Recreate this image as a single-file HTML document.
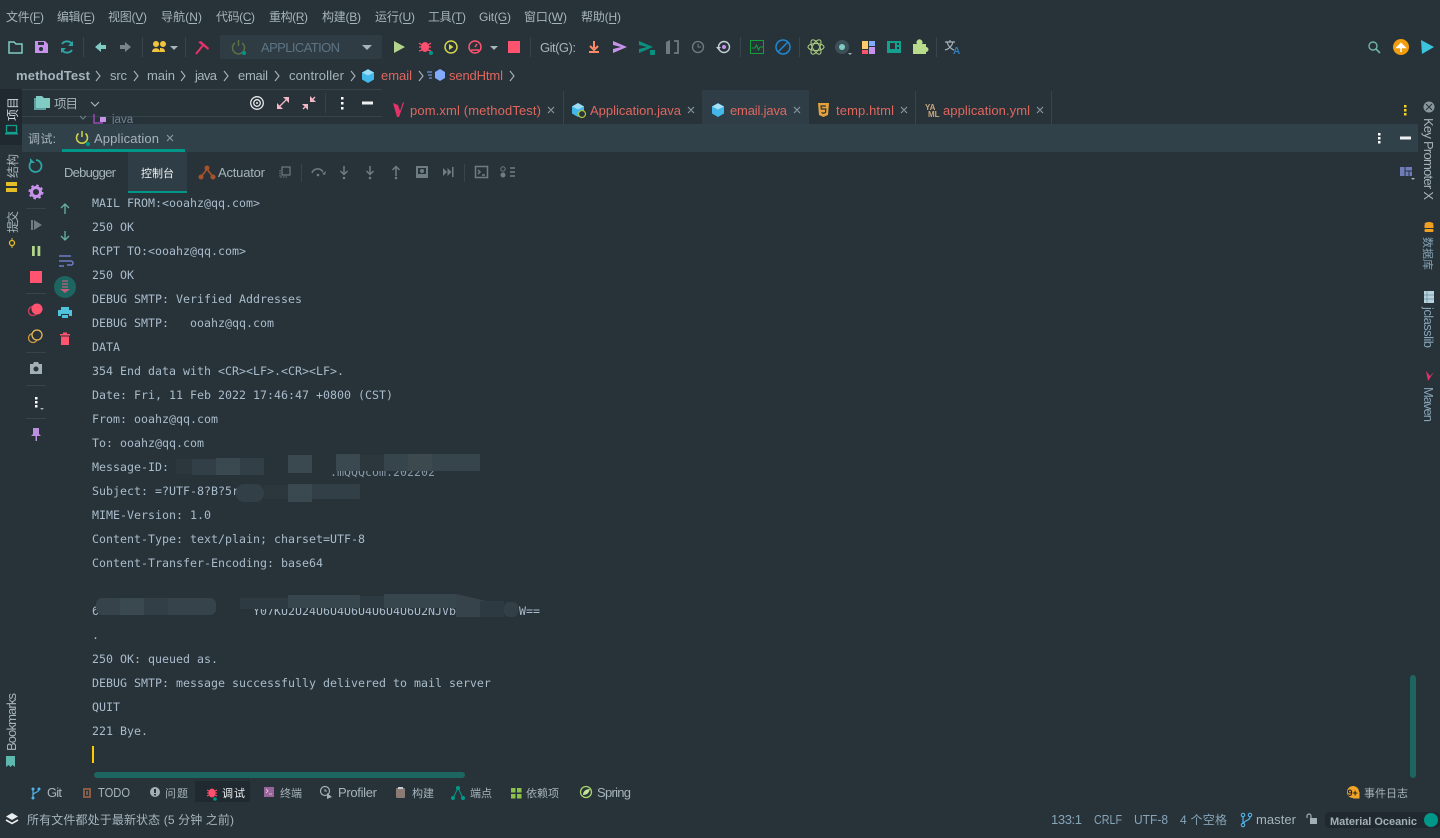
<!DOCTYPE html>
<html><head><meta charset="utf-8"><title>methodTest</title>
<style>
html,body{margin:0;padding:0;background:#283239;width:1440px;height:838px;overflow:hidden}
svg{display:block}
text{font-family:"Liberation Sans","Noto Sans CJK SC",sans-serif;font-size:12px;fill:#a6b4bc;white-space:pre}
.m text{font-family:"DejaVu Sans Mono","Liberation Mono",monospace;font-size:11.63px;fill:#a9bccb}
.r text,text.r{fill:#e0675e}
.b{fill:#86a5b8}
.l text,text.l{font-size:13px}
.c{font-size:11px}
</style></head><body>
<svg width="1440" height="838" viewBox="0 0 1440 838" xmlns="http://www.w3.org/2000/svg">
<rect width="1440" height="838" fill="#283239"/>

<!-- menu -->
<g>
<text x="6" y="21" textLength="38">文件(F)</text><rect x="34" y="23" width="6" height="1" fill="#a6b4bc"/>
<text x="57" y="21" textLength="38">编辑(E)</text><rect x="85" y="23" width="6" height="1" fill="#a6b4bc"/>
<text x="108" y="21" textLength="39">视图(V)</text><rect x="136" y="23" width="7" height="1" fill="#a6b4bc"/>
<text x="161" y="21" textLength="41">导航(N)</text><rect x="189" y="23" width="8" height="1" fill="#a6b4bc"/>
<text x="216" y="21" textLength="39">代码(C)</text><rect x="244" y="23" width="7" height="1" fill="#a6b4bc"/>
<text x="269" y="21" textLength="39">重构(R)</text><rect x="297" y="23" width="7" height="1" fill="#a6b4bc"/>
<text x="322" y="21" textLength="39">构建(B)</text><rect x="350" y="23" width="7" height="1" fill="#a6b4bc"/>
<text x="375" y="21" textLength="40">运行(U)</text><rect x="403" y="23" width="8" height="1" fill="#a6b4bc"/>
<text x="428" y="21" textLength="38">工具(T)</text><rect x="456" y="23" width="6" height="1" fill="#a6b4bc"/>
<text x="479" y="21" textLength="32">Git(G)</text><rect x="500" y="23" width="7" height="1" fill="#a6b4bc"/>
<text x="524" y="21" textLength="43">窗口(W)</text><rect x="552" y="23" width="10" height="1" fill="#a6b4bc"/>
<text x="581" y="21" textLength="40">帮助(H)</text><rect x="609" y="23" width="7" height="1" fill="#a6b4bc"/>
</g>

<!-- toolbar -->
<g>
<path d="M9 42h5l2 2h6v9H9z" fill="none" stroke="#80cbc4" stroke-width="1.500"/>
<path d="M35 41h10l3 3v9H35z" fill="#c792ea"/><rect x="38" y="42" width="6" height="3" fill="#283239"/><circle cx="41" cy="49" r="2" fill="#283239"/>
<path d="M62 44a6 6 0 0 1 10 0M72 50a6 6 0 0 1-10 0" fill="none" stroke="#2fa3a3" stroke-width="2"/><path d="M73 41v5h-5zM61 53v-5h5z" fill="#2fa3a3"/>
<rect x="83" y="37" width="1" height="20" fill="#36444c"/>
<path d="M95 47l6-5v3h5v4h-5v3z" fill="#80cbc4"/>
<path d="M131 47l-6-5v3h-5v4h5v3z" fill="#78848a"/>
<rect x="142" y="37" width="1" height="20" fill="#36444c"/>
<circle cx="156" cy="44" r="3" fill="#f2c43c"/><circle cx="163" cy="44" r="3" fill="#f2c43c"/><path d="M152 52c0-5 8-5 8 0zM160 52h5c0-4-3-4-5-4z" fill="#f2c43c"/>
<path d="M170 46h8l-4 4z" fill="#a6b4bc"/>
<rect x="185" y="37" width="1" height="20" fill="#36444c"/>
<path d="M196 54l8-10" fill="none" stroke="#e2336b" stroke-width="2"/><path d="M198 42l3-1 8 7-1 2z" fill="#e2336b"/>
<rect x="220" y="35" width="162" height="24" rx="2" fill="#303c44"/>
<path d="M235 43a6 6 0 1 0 7 0M238.500 40v6" fill="none" stroke="#5e6f45" stroke-width="1.500"/><circle cx="244" cy="53" r="2" fill="#009688"/>
<text x="261" y="52" textLength="79" style="font-size:13px;fill:#5c7484">APPLICATION</text>
<path d="M362 45h10l-5 5z" fill="#a6b4bc"/>
<path d="M394 41l11 6-11 6z" fill="#b2d58c"/>
<ellipse cx="425" cy="47" rx="4" ry="5" fill="#ff4f6f"/><path d="M419 43l3 2M431 43l-3 2M419 47h3M431 47h-3M419 51l3-1M431 51l-3-1" stroke="#ff4f6f" stroke-width="1.300"/><circle cx="431" cy="53" r="2" fill="#009688"/>
<circle cx="451" cy="47" r="6" fill="none" stroke="#d3d34a" stroke-width="1.500"/><path d="M449 44l4.500 3-4.500 3z" fill="#d3d34a"/>
<circle cx="475" cy="47" r="6" fill="none" stroke="#ff5370" stroke-width="1.500"/><path d="M475 47l2-3" stroke="#ff5370" stroke-width="1.500"/><path d="M471 50h8" stroke="#ff5370" stroke-width="1.500"/>
<path d="M490 46h8l-4 4z" fill="#a6b4bc"/>
<rect x="508" y="41" width="12" height="12" fill="#ff5370"/>
<rect x="530" y="37" width="1" height="20" fill="#36444c"/>
<text class="l" x="540" y="52" textLength="36">Git(G):</text>
<path d="M594 41v7M590 46l4 4 4-4" fill="none" stroke="#ff8a65" stroke-width="2"/><rect x="589" y="51" width="10" height="2" fill="#ff8a65"/>
<path d="M613 41l14 6-14 6v-4l8-2-8-2z" fill="#c792ea"/>
<path d="M639 41l14 6-14 6v-4l8-2-8-2z" fill="#0b8f7f"/><rect x="650" y="50" width="5" height="5" fill="#0b8f7f"/>
<path d="M674 41h4v12h-4" fill="none" stroke="#6d7a81" stroke-width="1.800"/><path d="M666 42l4-2v14h-4z" fill="#6d7a81"/>
<circle cx="698" cy="47" r="5.500" fill="none" stroke="#6f7c83" stroke-width="1.300"/><path d="M698 44v3h3" fill="none" stroke="#6f7c83"/>
<circle cx="724" cy="47" r="5.500" fill="none" stroke="#c5d0d6" stroke-width="1.400"/><circle cx="724" cy="47" r="2" fill="#c792ea"/><path d="M716 47h5l-2.500 3z" fill="#c5d0d6"/>
<rect x="740" y="37" width="1" height="20" fill="#36444c"/>
<rect x="750.500" y="40.500" width="13" height="13" fill="none" stroke="#11a03b"/><path d="M752 48h3l1.500-3 2 5 1.500-3h3" fill="none" stroke="#11a03b"/>
<circle cx="783" cy="47" r="7" fill="none" stroke="#1e88d2" stroke-width="1.500"/><path d="M778 52l10-10" stroke="#1e88d2" stroke-width="1.500"/>
<rect x="799" y="37" width="1" height="20" fill="#36444c"/>
<g fill="none" stroke="#a6c97d" stroke-width="1.100"><ellipse cx="816" cy="47" rx="8" ry="3.500"/><ellipse cx="816" cy="47" rx="8" ry="3.500" transform="rotate(60 816 47)"/><ellipse cx="816" cy="47" rx="8" ry="3.500" transform="rotate(120 816 47)"/></g>
<circle cx="842" cy="47" r="7" fill="#3d5058"/><circle cx="842" cy="47" r="3" fill="#80cbc4"/><path d="M848 53h4l-2 2z" fill="#a6b4bc"/>
<rect x="862" y="41" width="6" height="8" fill="#ffcb6b"/><rect x="869" y="41" width="6" height="5" fill="#82aaff"/><rect x="862" y="50" width="6" height="4" fill="#ff5370"/><rect x="869" y="47" width="6" height="7" fill="#c792ea"/>
<rect x="887" y="41" width="14" height="12" fill="#13a08f"/><rect x="890" y="43" width="5" height="6" fill="#283239"/><rect x="897" y="43" width="2" height="2" fill="#283239"/><rect x="897" y="47" width="2" height="2" fill="#283239"/>
<path d="M913 44h4a3 3 0 1 1 5 0h4v3a2.500 2.500 0 1 1 0 5v2h-13z" fill="#b8dc8c"/>
<rect x="936" y="37" width="1" height="20" fill="#36444c"/>
<path d="M945 42h10M950 40v2M947 42c1 4 4 7 7 8M953 42c-1 4-4 7-8 8" fill="none" stroke="#a6b4bc" stroke-width="1.200"/>
<text x="953" y="54" style="font-size:10px;font-weight:bold;fill:#2f7fbd">A</text>
<circle cx="1373" cy="46" r="4" fill="none" stroke="#6fb3ad" stroke-width="1.400"/><path d="M1376 49l4 4" stroke="#6fb3ad" stroke-width="1.600"/>
<circle cx="1401" cy="47" r="8" fill="#f29d0c"/><path d="M1401 52v-5M1397 47.500l4-4 4 4z" fill="#fff" stroke="#fff" stroke-width="1.500"/>
<path d="M1421 40l13 7-12 7z" fill="#3cc4dc"/>
</g>

<!-- breadcrumb -->
<g class="l">
<text x="16" y="80" textLength="74" style="font-weight:bold">methodTest</text>
<text x="110" y="80" textLength="17">src</text>
<text x="147" y="80" textLength="28">main</text>
<text x="195" y="80" textLength="22">java</text>
<text x="238" y="80" textLength="30">email</text>
<text x="289" y="80" textLength="55">controller</text>
<text class="r" x="381" y="80" textLength="31">email</text>
<text class="r" x="449" y="80" textLength="54">sendHtml</text>
<path d="M96 71l4 5-4 5M134 71l4 5-4 5M181 71l4 5-4 5M224 71l4 5-4 5M275 71l4 5-4 5M351 71l4 5-4 5M419 71l4 5-4 5M510 71l4 5-4 5" fill="none" stroke="#a6b4bc" stroke-width="1.100"/>
<path d="M368 69l6 3.500v7l-6 3.500-6-3.500v-7z" fill="#42b7ea"/><path d="M362 72.500l6 3 6-3-6-3z" fill="#9adcf5"/>
<path d="M440 69l5 3v6l-5 3-5-3v-6z" fill="#82aaff"/><path d="M427 72h5M428 75h4M429 78h3" stroke="#82aaff"/>
</g>

<!-- left strip -->
<rect x="0" y="89" width="22" height="56" fill="#1f292f"/>
<g>
<text transform="translate(17,121) rotate(-90)" textLength="24" style="fill:#cfd8dc">项目</text>
<rect x="6.500" y="125.500" width="10" height="7" fill="none" stroke="#13a08f" stroke-width="1.300"/><rect x="5" y="133" width="13" height="1.500" fill="#13a08f"/>
<text transform="translate(17,178) rotate(-90)" textLength="24">结构</text>
<rect x="6" y="182" width="11" height="4" fill="#e5bd26"/><rect x="6" y="188" width="11" height="4" fill="#e5bd26"/>
<text transform="translate(17,233) rotate(-90)" textLength="22">提交</text>
<circle cx="12" cy="243" r="2.500" fill="none" stroke="#e5bd26" stroke-width="1.300"/><path d="M12 238v2.500M12 245.500v2.500" stroke="#e5bd26"/>
<text class="l" transform="translate(16,751) rotate(-90)" textLength="58">Bookmarks</text>
<path d="M6 756h9v11l-2.500-2-2 2-2-2-2.500 2z" fill="#5fb8ae"/>
</g>

<!-- project panel -->
<rect x="22" y="89" width="360" height="1" fill="#35434b"/>
<rect x="22" y="116" width="360" height="1" fill="#35434b"/>
<path d="M34 98v12h12v-2h-10v-10z" fill="#5f9ea0"/><path d="M36 96h6l2 2h6v10H36z" fill="#80cbc4"/>
<text x="54" y="108" textLength="24" style="font-size:12.500px">项目</text>
<path d="M91 102l4 4 4-4" fill="none" stroke="#a6b4bc" stroke-width="1.200"/>
<circle cx="257" cy="103" r="6.300" fill="none" stroke="#e4e9eb" stroke-width="1.300"/><circle cx="257" cy="103" r="3.300" fill="none" stroke="#e4e9eb" stroke-width="1.300"/><circle cx="257" cy="103" r="1" fill="#e4e9eb"/>
<path d="M289 97v6l-6-6zM277 109v-6l6 6zM310 102v-6l6 6zM308 104v6l-6-6z" fill="#f2b8c6"/>
<path d="M286 100l-3 3M280 106l3-3M313 99l2-2M305 107l-2 2" stroke="#f2b8c6" stroke-width="1.300"/>
<rect x="325" y="93" width="1" height="20" fill="#36444c"/>
<rect x="341" y="97" width="2.500" height="2.500" fill="#fff"/><rect x="341" y="102" width="2.500" height="2.500" fill="#fff"/><rect x="341" y="107" width="2.500" height="2.500" fill="#fff"/>
<rect x="362" y="101.500" width="11" height="3" fill="#eef1f2"/>
<path d="M80 116l3 3 3-3" fill="none" stroke="#6a7c85" stroke-width="1.200"/>
<path d="M94 114v9h9" fill="none" stroke="#9c48b8" stroke-width="1.500"/><rect x="100" y="117" width="6" height="5" fill="#c792ea"/>
<text x="112" y="123" style="fill:#6f8290;font-size:11.500px">java</text>

<!-- editor tabs -->
<rect x="382" y="91" width="1036" height="33" fill="#283239"/>
<rect x="702" y="90" width="107" height="34" fill="#2f3e46"/>
<g class="l">
<path d="M393 103l5 2 2 6 3-9 1 1-5 14h-2z" fill="#e2336b"/>
<text class="r" x="410" y="115" textLength="131">pom.xml (methodTest)</text>
<path d="M548 107l6 6M554 107l-6 6M688 107l6 6M694 107l-6 6M794 107l6 6M800 107l-6 6M901 107l6 6M907 107l-6 6M1037 107l6 6M1043 107l-6 6" stroke="#8b9aa3" stroke-width="1.100"/>
<rect x="563" y="91" width="1" height="33" fill="#36444c"/>
<path d="M578 103l6 3.500v7l-6 3.500-6-3.500v-7z" fill="#42b7ea"/><path d="M578 103l6 3.500-6 3-6-3z" fill="#9adcf5"/><circle cx="582" cy="114" r="3.500" fill="#283239" stroke="#b3c33d" stroke-width="1.200"/>
<text class="r" x="590" y="115" textLength="91">Application.java</text>
<path d="M718 103l6 3.500v7l-6 3.500-6-3.500v-7z" fill="#42b7ea"/><path d="M712 106.500l6 3 6-3-6-3z" fill="#a6e1f7"/>
<text class="r" x="730" y="115" textLength="57">email.java</text>
<path d="M818 103h11l-1 12-4.500 2-4.500-2z" fill="#e5a13b"/><path d="M826 106h-5l.3 3h4.500l-.3 3.500-2 .8-2-.8" fill="none" stroke="#283239" stroke-width="1.200"/>
<text class="r" x="836" y="115" textLength="58">temp.html</text>
<rect x="915" y="91" width="1" height="33" fill="#36444c"/>
<text x="925" y="110" style="font-size:8px;font-weight:bold;fill:#caa77b">YA</text><text x="928" y="117" style="font-size:8px;font-weight:bold;fill:#caa77b">ML</text>
<text class="r" x="943" y="115" textLength="87">application.yml</text>
<rect x="1051" y="91" width="1" height="33" fill="#36444c"/>
<rect x="1404" y="105" width="2.500" height="2.500" fill="#f5d327"/><rect x="1404" y="109" width="2.500" height="2.500" fill="#f5d327"/><rect x="1404" y="113" width="2.500" height="2.500" fill="#f5d327"/>
</g>

<!-- debug header -->
<rect x="22" y="124" width="1396" height="28" fill="#31414a"/>
<text x="28" y="143" textLength="28">调试:</text>
<path d="M78.500 133.500a5.500 5.500 0 1 0 7 0M82 131v6" fill="none" stroke="#d3d34a" stroke-width="1.500"/><circle cx="88" cy="144" r="2" fill="#009688"/>
<text class="l" x="94" y="143" textLength="65">Application</text>
<path d="M167 135l6 6M173 135l-6 6" stroke="#8b9aa3" stroke-width="1.100"/>
<rect x="62" y="149" width="123" height="3" fill="#009688"/>
<rect x="1378" y="133" width="2.500" height="2.500" fill="#fff"/><rect x="1378" y="137" width="2.500" height="2.500" fill="#fff"/><rect x="1378" y="141" width="2.500" height="2.500" fill="#fff"/>
<rect x="1400" y="136.500" width="11" height="3" fill="#eef1f2"/>

<!-- subtabs -->
<text class="l" x="64" y="177" textLength="52">Debugger</text>
<rect x="128" y="152" width="59" height="39" fill="#2f3e46"/>
<rect x="128" y="191" width="59" height="2" fill="#009688"/>
<text x="141" y="177" textLength="33" style="font-size:11px;fill:#eef1f2">控制台</text>
<path d="M201 177l6-8 6 8" fill="none" stroke="#a6522b" stroke-width="1.600"/><circle cx="207" cy="168" r="2.500" fill="#a6522b"/><circle cx="201" cy="177" r="2.500" fill="#a6522b"/><circle cx="213" cy="177" r="2.500" fill="#a6522b"/>
<text class="l" x="218" y="177" textLength="47">Actuator</text>
<rect x="282" y="167" width="8" height="8" fill="none" stroke="#6f7c83" stroke-width="1.200"/><path d="M280 170v7h7" fill="none" stroke="#6f7c83" stroke-dasharray="1.500 1"/>
<rect x="301" y="164" width="1" height="18" fill="#36444c"/>
<g fill="none" stroke="#6f7c83" stroke-width="1.500">
<path d="M312 173a6 6 0 0 1 11-1"/><path d="M344 166v8M340.500 171l3.500 3.500 3.500-3.500M370 166v8M366.500 171l3.500 3.500 3.500-3.500M396 176v-9M392.500 170l3.500-3.500 3.500 3.500"/>
<rect x="475.500" y="166.500" width="12" height="11"/>
<path d="M478 170l2 2-2 2M482 175h3"/>
<path d="M510 168h5M510 172h5M510 176h5"/>
</g>
<rect x="416" y="166" width="12" height="12" fill="#6f7c83"/><rect x="418" y="168" width="8" height="6" fill="#283239"/><circle cx="422" cy="171" r="2" fill="#6f7c83"/>
<path d="M326 171l-4 3 3 1z" fill="#6f7c83"/>
<circle cx="318" cy="175" r="1.300" fill="#6f7c83"/><circle cx="344" cy="178" r="1.300" fill="#6f7c83"/><circle cx="370" cy="178" r="1.300" fill="#6f7c83"/><circle cx="396" cy="178" r="1.300" fill="#6f7c83"/>
<path d="M443 168l4 4-4 4zM447.500 168l4 4-4 4z" fill="#6f7c83"/><rect x="452" y="167" width="1.500" height="10" fill="#6f7c83"/>
<rect x="464" y="164" width="1" height="18" fill="#36444c"/>
<circle cx="503" cy="169" r="2.200" fill="none" stroke="#6f7c83"/><circle cx="503" cy="175" r="2.500" fill="#6f7c83"/>
<rect x="1400" y="167" width="12" height="9" fill="#6f7dbb"/><path d="M1405 167v9M1405 171h7M1409 171v5" stroke="#283239"/><path d="M1411 178h4l-2 2z" fill="#a6b4bc"/>

<!-- debug column 1 -->
<g>
<path d="M31 162a6 6 0 1 0 5-2" fill="none" stroke="#2fa3a3" stroke-width="1.800"/><path d="M30 158v5h5z" fill="#2fa3a3"/>
<circle cx="36" cy="192" r="4.500" fill="none" stroke="#c792ea" stroke-width="3"/><circle cx="36" cy="192" r="6.500" fill="none" stroke="#c792ea" stroke-width="2" stroke-dasharray="2.500 2.600"/>
<rect x="26" y="208" width="20" height="1" fill="#36444c"/>
<rect x="31" y="220" width="2" height="10" fill="#6f7c83"/><path d="M34 220l8 5-8 5z" fill="#6f7c83"/>
<rect x="32" y="246" width="2.800" height="10" fill="#b2d58c"/><rect x="37.500" y="246" width="2.800" height="10" fill="#b2d58c"/>
<rect x="30" y="271" width="12" height="12" fill="#ff5370"/>
<rect x="26" y="293" width="20" height="1" fill="#36444c"/>
<circle cx="33" cy="311" r="4.500" fill="none" stroke="#c73a54" stroke-width="1.500"/><circle cx="37" cy="309" r="5.500" fill="#ff5370"/>
<circle cx="33" cy="338" r="4.500" fill="none" stroke="#cf9a3e" stroke-width="1.300"/><circle cx="37" cy="335" r="5" fill="#283239" stroke="#e8b85a" stroke-width="1.300"/>
<rect x="26" y="352" width="20" height="1" fill="#36444c"/>
<path d="M30 364h3l1-2h4l1 2h3v10H30z" fill="#a2afb6"/><circle cx="36" cy="369" r="2.500" fill="#283239"/>
<rect x="26" y="385" width="20" height="1" fill="#36444c"/>
<rect x="35" y="397" width="2.500" height="2.500" fill="#fff"/><rect x="35" y="401" width="2.500" height="2.500" fill="#fff"/><rect x="35" y="405" width="2.500" height="2.500" fill="#fff"/>
<path d="M40 408h4l-2 2z" fill="#a6b4bc"/>
<rect x="26" y="418" width="20" height="1" fill="#36444c"/>
<path d="M33 428h6v6l2 2h-10l2-2zM35.500 436h1.500v5h-1.500z" fill="#bd8fe0"/>
</g>

<!-- debug column 2 -->
<g>
<path d="M65 214v-9M61 208l4-4 4 4M65 231v9M61 236l4 4 4-4" fill="none" stroke="#66b3a6" stroke-width="1.300"/>
<path d="M59 256h12M59 261h12a2 2 0 0 1 0 4h-4M59 266h5" fill="none" stroke="#6c7dc4" stroke-width="1.500"/>
<circle cx="65" cy="287" r="11" fill="#1c6560"/>
<path d="M62 281h6M62 284h6M62 287h6" stroke="#b7687e" stroke-width="1.200"/><path d="M60 289h10l-5 4z" fill="#c55d78"/>
<rect x="61" y="307" width="8" height="3" fill="#4fc3dc"/><path d="M58 310h14v6h-3v-2h-8v2h-3z" fill="#4fc3dc"/><rect x="62" y="315" width="6" height="3" fill="#4fc3dc"/>
<rect x="60" y="334" width="10" height="1.500" fill="#ff5370"/><rect x="63" y="332.500" width="4" height="1.500" fill="#ff5370"/><path d="M61 336.500h8v8.500h-8z" fill="#ff5370"/>
</g>

<!-- console -->
<g class="m">
<text x="92" y="207">MAIL FROM:&lt;ooahz@qq.com&gt;</text>
<text x="92" y="231">250 OK</text>
<text x="92" y="255">RCPT TO:&lt;ooahz@qq.com&gt;</text>
<text x="92" y="279">250 OK</text>
<text x="92" y="303">DEBUG SMTP: Verified Addresses</text>
<text x="92" y="327">DEBUG SMTP:   ooahz@qq.com</text>
<text x="92" y="351">DATA</text>
<text x="92" y="375">354 End data with &lt;CR&gt;&lt;LF&gt;.&lt;CR&gt;&lt;LF&gt;.</text>
<text x="92" y="399">Date: Fri, 11 Feb 2022 17:46:47 +0800 (CST)</text>
<text x="92" y="423">From: ooahz@qq.com</text>
<text x="92" y="447">To: ooahz@qq.com</text>
<text x="92" y="471">Message-ID:</text>
<text x="330" y="476" style="fill:#8a9caa">.mQQQcom.202202</text>
<text x="92" y="495">Subject: =?UTF-8?B?5rWW</text>
<text x="92" y="519">MIME-Version: 1.0</text>
<text x="92" y="543">Content-Type: text/plain; charset=UTF-8</text>
<text x="92" y="567">Content-Transfer-Encoding: base64</text>
<text x="92" y="615">6</text>
<text x="253" y="615">Y07KU2U24U6U4U6U4U6U4U6U2NJVbU5</text>
<text x="519" y="615">W==</text>
<text x="92" y="639">.</text>
<text x="92" y="663">250 OK: queued as.</text>
<text x="92" y="687">DEBUG SMTP: message successfully delivered to mail server</text>
<text x="92" y="711">QUIT</text>
<text x="92" y="735">221 Bye.</text>
</g>
<rect x="92" y="746" width="2" height="17" fill="#ffcb00"/>

<!-- redactions -->
<g>
<rect x="176" y="459" width="16" height="15" fill="#2b363d"/>
<rect x="192" y="459" width="24" height="16" fill="#323f47"/><rect x="216" y="458" width="24" height="17" fill="#3a4850"/><rect x="240" y="458" width="24" height="17" fill="#323f47"/>
<rect x="288" y="455" width="24" height="18" fill="#3a4850"/>
<rect x="320" y="456" width="16" height="15" fill="#283239"/>
<rect x="336" y="454" width="24" height="17" fill="#3a4850"/>
<rect x="360" y="455" width="24" height="16" fill="#2b363d"/>
<rect x="384" y="454" width="96" height="17" fill="#36444c"/><rect x="408" y="454" width="24" height="17" fill="#3c494f"/>
<rect x="236" y="484" width="28" height="18" rx="8" fill="#323f47"/>
<rect x="288" y="484" width="24" height="18" fill="#3a4850"/><rect x="312" y="484" width="48" height="15" fill="#323f47"/>
<rect x="264" y="485" width="24" height="14" fill="#2b363d"/>
<rect x="96" y="598" width="120" height="17" rx="6" fill="#36434b"/><rect x="120" y="598" width="24" height="17" fill="#3a4850"/><rect x="144" y="598" width="24" height="17" fill="#323f47"/>
<rect x="240" y="598" width="48" height="11" fill="#2e3a41"/>
<rect x="288" y="595" width="72" height="13" fill="#37454d"/>
<rect x="360" y="596" width="24" height="12" fill="#2e3a41"/>
<rect x="384" y="594" width="72" height="14" fill="#37454d"/>
<path d="M456 594l48 11v12h-48z" fill="#36434b"/>
<rect x="480" y="601" width="24" height="16" fill="#2e3a41"/><rect x="504" y="602" width="14" height="15" rx="5" fill="#323f47"/>
</g>

<!-- scrollbars -->
<rect x="94" y="772" width="371" height="6" rx="3" fill="#1d6560"/>
<rect x="1410" y="675" width="6" height="103" rx="3" fill="#1d6560"/>

<!-- right strip -->
<g class="l">
<circle cx="1429" cy="107" r="5.500" fill="#8b979e"/><path d="M1426 104l6 6M1432 104l-6 6" stroke="#283239"/>
<text transform="translate(1424,118) rotate(90)" textLength="82">Key Promoter X</text>
<ellipse cx="1429" cy="224" rx="4.500" ry="2" fill="#f0a020"/><rect x="1424.500" y="225" width="9" height="3" fill="#f0a020"/><rect x="1424.500" y="229" width="9" height="3" rx="1" fill="#f0a020"/>
<text transform="translate(1424,237) rotate(90)" textLength="33" class="b" style="font-size:11px">数据库</text>
<rect x="1424" y="291" width="10" height="12" fill="#b7d3df"/><path d="M1427 291v12M1424 295h10M1424 299h10" stroke="#6a8c9e" stroke-width=".7"/>
<text transform="translate(1424,307) rotate(90)" textLength="41" class="b">jclasslib</text>
<path d="M1426 371l2 10 6-9-4 4z" fill="#e2336b"/>
<text transform="translate(1424,387) rotate(90)" textLength="35" class="b">Maven</text>
</g>

<!-- tool window bar -->
<g>
<rect x="195" y="781" width="55" height="21" fill="#1f292f"/>
<circle cx="33" cy="789" r="1.500" fill="#4fb3e8"/><circle cx="39" cy="789" r="1.500" fill="#4fb3e8"/><circle cx="33" cy="798" r="1.500" fill="#4fb3e8"/><path d="M33 789v9M39 789c0 4-6 3-6 6" fill="none" stroke="#4fb3e8" stroke-width="1.200"/>
<text class="l" x="47" y="797" textLength="15">Git</text>
<rect x="83" y="788" width="8" height="10" fill="#8a5a44"/><rect x="85" y="790" width="4" height="6" fill="#283239"/><rect x="86.500" y="791" width="1" height="4" fill="#c79070"/>
<text class="l" x="98" y="797" textLength="32" lengthAdjust="spacingAndGlyphs">TODO</text>
<circle cx="155" cy="792" r="5" fill="#a2afb6"/><rect x="154" y="789" width="2" height="4" fill="#283239"/><rect x="154" y="794" width="2" height="1.500" fill="#283239"/>
<text class="c" x="165" y="797" textLength="23">问题</text>
<ellipse cx="212" cy="793" rx="3.500" ry="4.500" fill="#ff4f6f"/><path d="M207 790l2 1M217 790l-2 1M207 793h2M217 793h-2M207 796l2-1M217 796l-2-1" stroke="#ff4f6f"/><circle cx="215" cy="799" r="1.800" fill="#009688"/>
<text class="c" x="222" y="797" textLength="23" style="fill:#eef1f2">调试</text>
<rect x="264" y="787" width="10" height="10" fill="#99649a"/><path d="M266 789l2 2-2 2M269 794h3" fill="none" stroke="#e5d4e5" stroke-width=".8"/>
<text class="c" x="280" y="797" textLength="22">终端</text>
<circle cx="325" cy="791" r="4.500" fill="none" stroke="#a2afb6" stroke-width="1.200"/><path d="M325 789v2h2" stroke="#a2afb6" fill="none"/><path d="M327 793l5 4-5 2z" fill="#a2afb6"/>
<text class="l" x="338" y="797" textLength="39">Profiler</text>
<rect x="396" y="788" width="9" height="10" rx="1" fill="#8c7a74"/><rect x="398" y="787" width="5" height="2" fill="#c5d0d6"/>
<text class="c" x="412" y="797" textLength="22">构建</text>
<circle cx="458" cy="788" r="2" fill="#009a8b"/><circle cx="453" cy="798" r="2" fill="#009a8b"/><circle cx="463" cy="798" r="2" fill="#009a8b"/><path d="M458 788l-5 10M458 788l5 10" stroke="#009a8b"/>
<text class="c" x="470" y="797" textLength="22">端点</text>
<rect x="511" y="788" width="4.500" height="4.500" fill="#8bc34a"/><rect x="517" y="788" width="4.500" height="4.500" fill="#8bc34a"/><rect x="511" y="794" width="4.500" height="4.500" fill="#8bc34a"/><rect x="517" y="794" width="4.500" height="4.500" fill="#8bc34a"/>
<text class="c" x="526" y="797" textLength="33">依赖项</text>
<circle cx="586" cy="792" r="5.500" fill="none" stroke="#a6d46a" stroke-width="1.300"/><path d="M583 795c0-4 3-6 7-6-1 4-3 6-7 6z" fill="#c8e296"/>
<text class="l" x="597" y="797" textLength="34">Spring</text>
<circle cx="1353" cy="792" r="6" fill="#f0a52a"/><rect x="1353" y="792" width="6.500" height="6.500" fill="#f0a52a"/>
<text x="1347.500" y="796" style="font-size:9px;font-weight:bold;fill:#222">9+</text>
<text class="c" x="1364" y="797" textLength="44">事件日志</text>
</g>

<!-- status bar -->
<g>
<path d="M12 813l6 3.500-6 3.500-6-3.500z" fill="#e8edef"/><path d="M6 820l6 3.500 6-3.500" fill="none" stroke="#e8edef" stroke-width="1.600"/>
<text x="27" y="824" textLength="207">所有文件都处于最新状态 (5 分钟 之前)</text>
<text class="b l" x="1051" y="824" textLength="31">133:1</text>
<text class="b l" x="1094" y="824" textLength="28" lengthAdjust="spacingAndGlyphs">CRLF</text>
<text class="b l" x="1134" y="824" textLength="34" lengthAdjust="spacingAndGlyphs">UTF-8</text>
<text class="b" x="1180" y="824" textLength="47">4 个空格</text>
<circle cx="1243" cy="815" r="1.700" fill="none" stroke="#4fb3e8" stroke-width="1.100"/><circle cx="1250" cy="815" r="1.700" fill="none" stroke="#4fb3e8" stroke-width="1.100"/><circle cx="1243" cy="825" r="1.700" fill="none" stroke="#4fb3e8" stroke-width="1.100"/><path d="M1243 817v6M1250 817c0 4-6 3-6 6" fill="none" stroke="#4fb3e8" stroke-width="1.200"/>
<text class="l" x="1256" y="824" textLength="40">master</text>
<rect x="1310" y="818" width="7" height="6" fill="#a2afb6"/><path d="M1307 818v-2a2 2 0 0 1 4 0v2" fill="none" stroke="#a2afb6" stroke-width="1.200"/>
<rect x="1325" y="812" width="115" height="16" rx="4" fill="#1f292f"/>
<text x="1330" y="825" textLength="87" style="font-weight:bold;font-size:11px;fill:#a2afb6">Material Oceanic</text>
<circle cx="1431" cy="820" r="7" fill="#009688"/>
</g>
</svg>
</body></html>
